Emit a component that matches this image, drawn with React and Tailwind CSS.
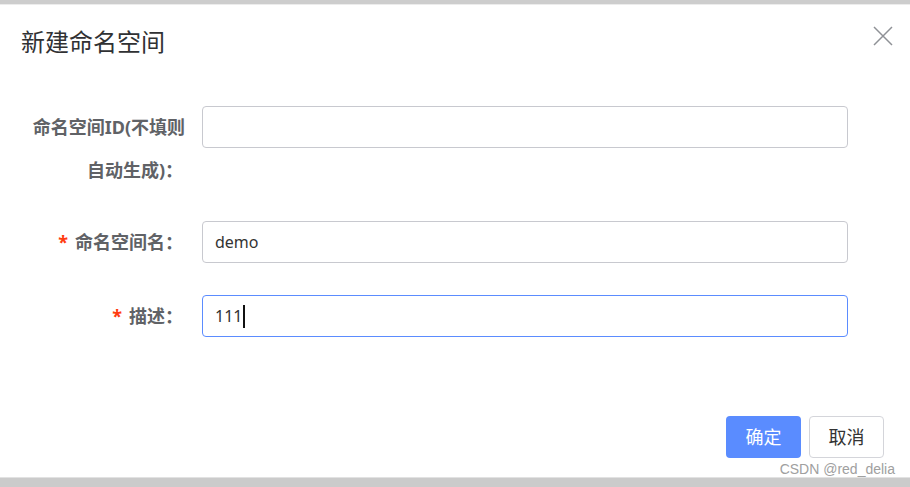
import React from "react";

const cjk = { fontFamily: '"Noto Sans", "Noto Sans CJK SC", sans-serif' };

function Label({ children, required }) {
  return (
    <div className="w-[186px] shrink-0 whitespace-nowrap pr-[19px] text-right text-[18px] font-bold leading-[42px] text-[#606266]">
      {required && <span className="mr-[7px] text-[#ff3b0f]">*</span>}
      {children}
    </div>
  );
}

function Input({ value, focus, caret }) {
  return (
    <div
      className={
        "flex h-[42px] w-[646px] items-center rounded-[4px] border bg-white px-[12px] text-[16px] text-[#333] " +
        (focus ? "border-[#5b8cff]" : "border-[#c8c9cf]")
      }
    >
      <span>{value}</span>
      {caret && <span className="ml-[1px] inline-block h-[23px] w-[2px] bg-[#111]" />}
    </div>
  );
}

export default function App() {
  return (
    <div className="relative flex h-[487px] w-[910px] flex-col overflow-hidden bg-white" style={cjk}>
      <div className="h-[4px] shrink-0 bg-[#cdcdcd]" />
      <div className="h-[1px] shrink-0 bg-[#ececec]" />
      <div className="flex flex-1 flex-col">
        <div className="flex items-start justify-between pl-[21px] pr-[17px] pt-[22px]">
          <div className="text-[24px] leading-[30px] text-[#303133]">新建命名空间</div>
          <svg width="20" height="20" viewBox="0 0 20 20" className="mt-[-1px]">
            <path d="M1 1 L19 19 M19 1 L1 19" stroke="#8f9196" strokeWidth="1.5" fill="none" />
          </svg>
        </div>

        <div className="mt-[49px] flex flex-col pl-[16px]">
          <div className="flex items-start">
            <div className="w-[186px] shrink-0 whitespace-nowrap pr-[19px] text-right text-[18px] font-bold leading-[43px] text-[#606266]">
              <div className="mr-[-2px]">命名空间ID(不填则</div>
              <div>自动生成)：</div>
            </div>
            <Input value="" />
          </div>

          <div className="mt-[29px] flex items-start">
            <Label required>命名空间名：</Label>
            <Input value="demo" />
          </div>

          <div className="mt-[32px] flex items-start">
            <Label required>描述：</Label>
            <Input value="111" focus caret />
          </div>
        </div>

        <div className="mt-[79px] flex justify-end gap-[8px] pr-[26px]">
          <button className="h-[42px] w-[75px] rounded-[4px] bg-[#5a8cff] text-[18px] text-white">确定</button>
          <button className="h-[42px] w-[75px] rounded-[4px] border border-[#d4d5da] bg-white text-[18px] text-[#333]">取消</button>
        </div>
      </div>
      <div className="h-[1px] shrink-0 bg-[#e2e2e2]" />
      <div className="h-[9px] shrink-0 bg-[#cbcbcb]" />
      <div
        className="absolute bottom-[10px] right-[15px] text-[14px] leading-[16px] text-[#a0a0a0]"
        style={{ fontFamily: '"Liberation Sans", Arial, sans-serif' }}
      >
        CSDN @red_delia
      </div>
    </div>
  );
}
